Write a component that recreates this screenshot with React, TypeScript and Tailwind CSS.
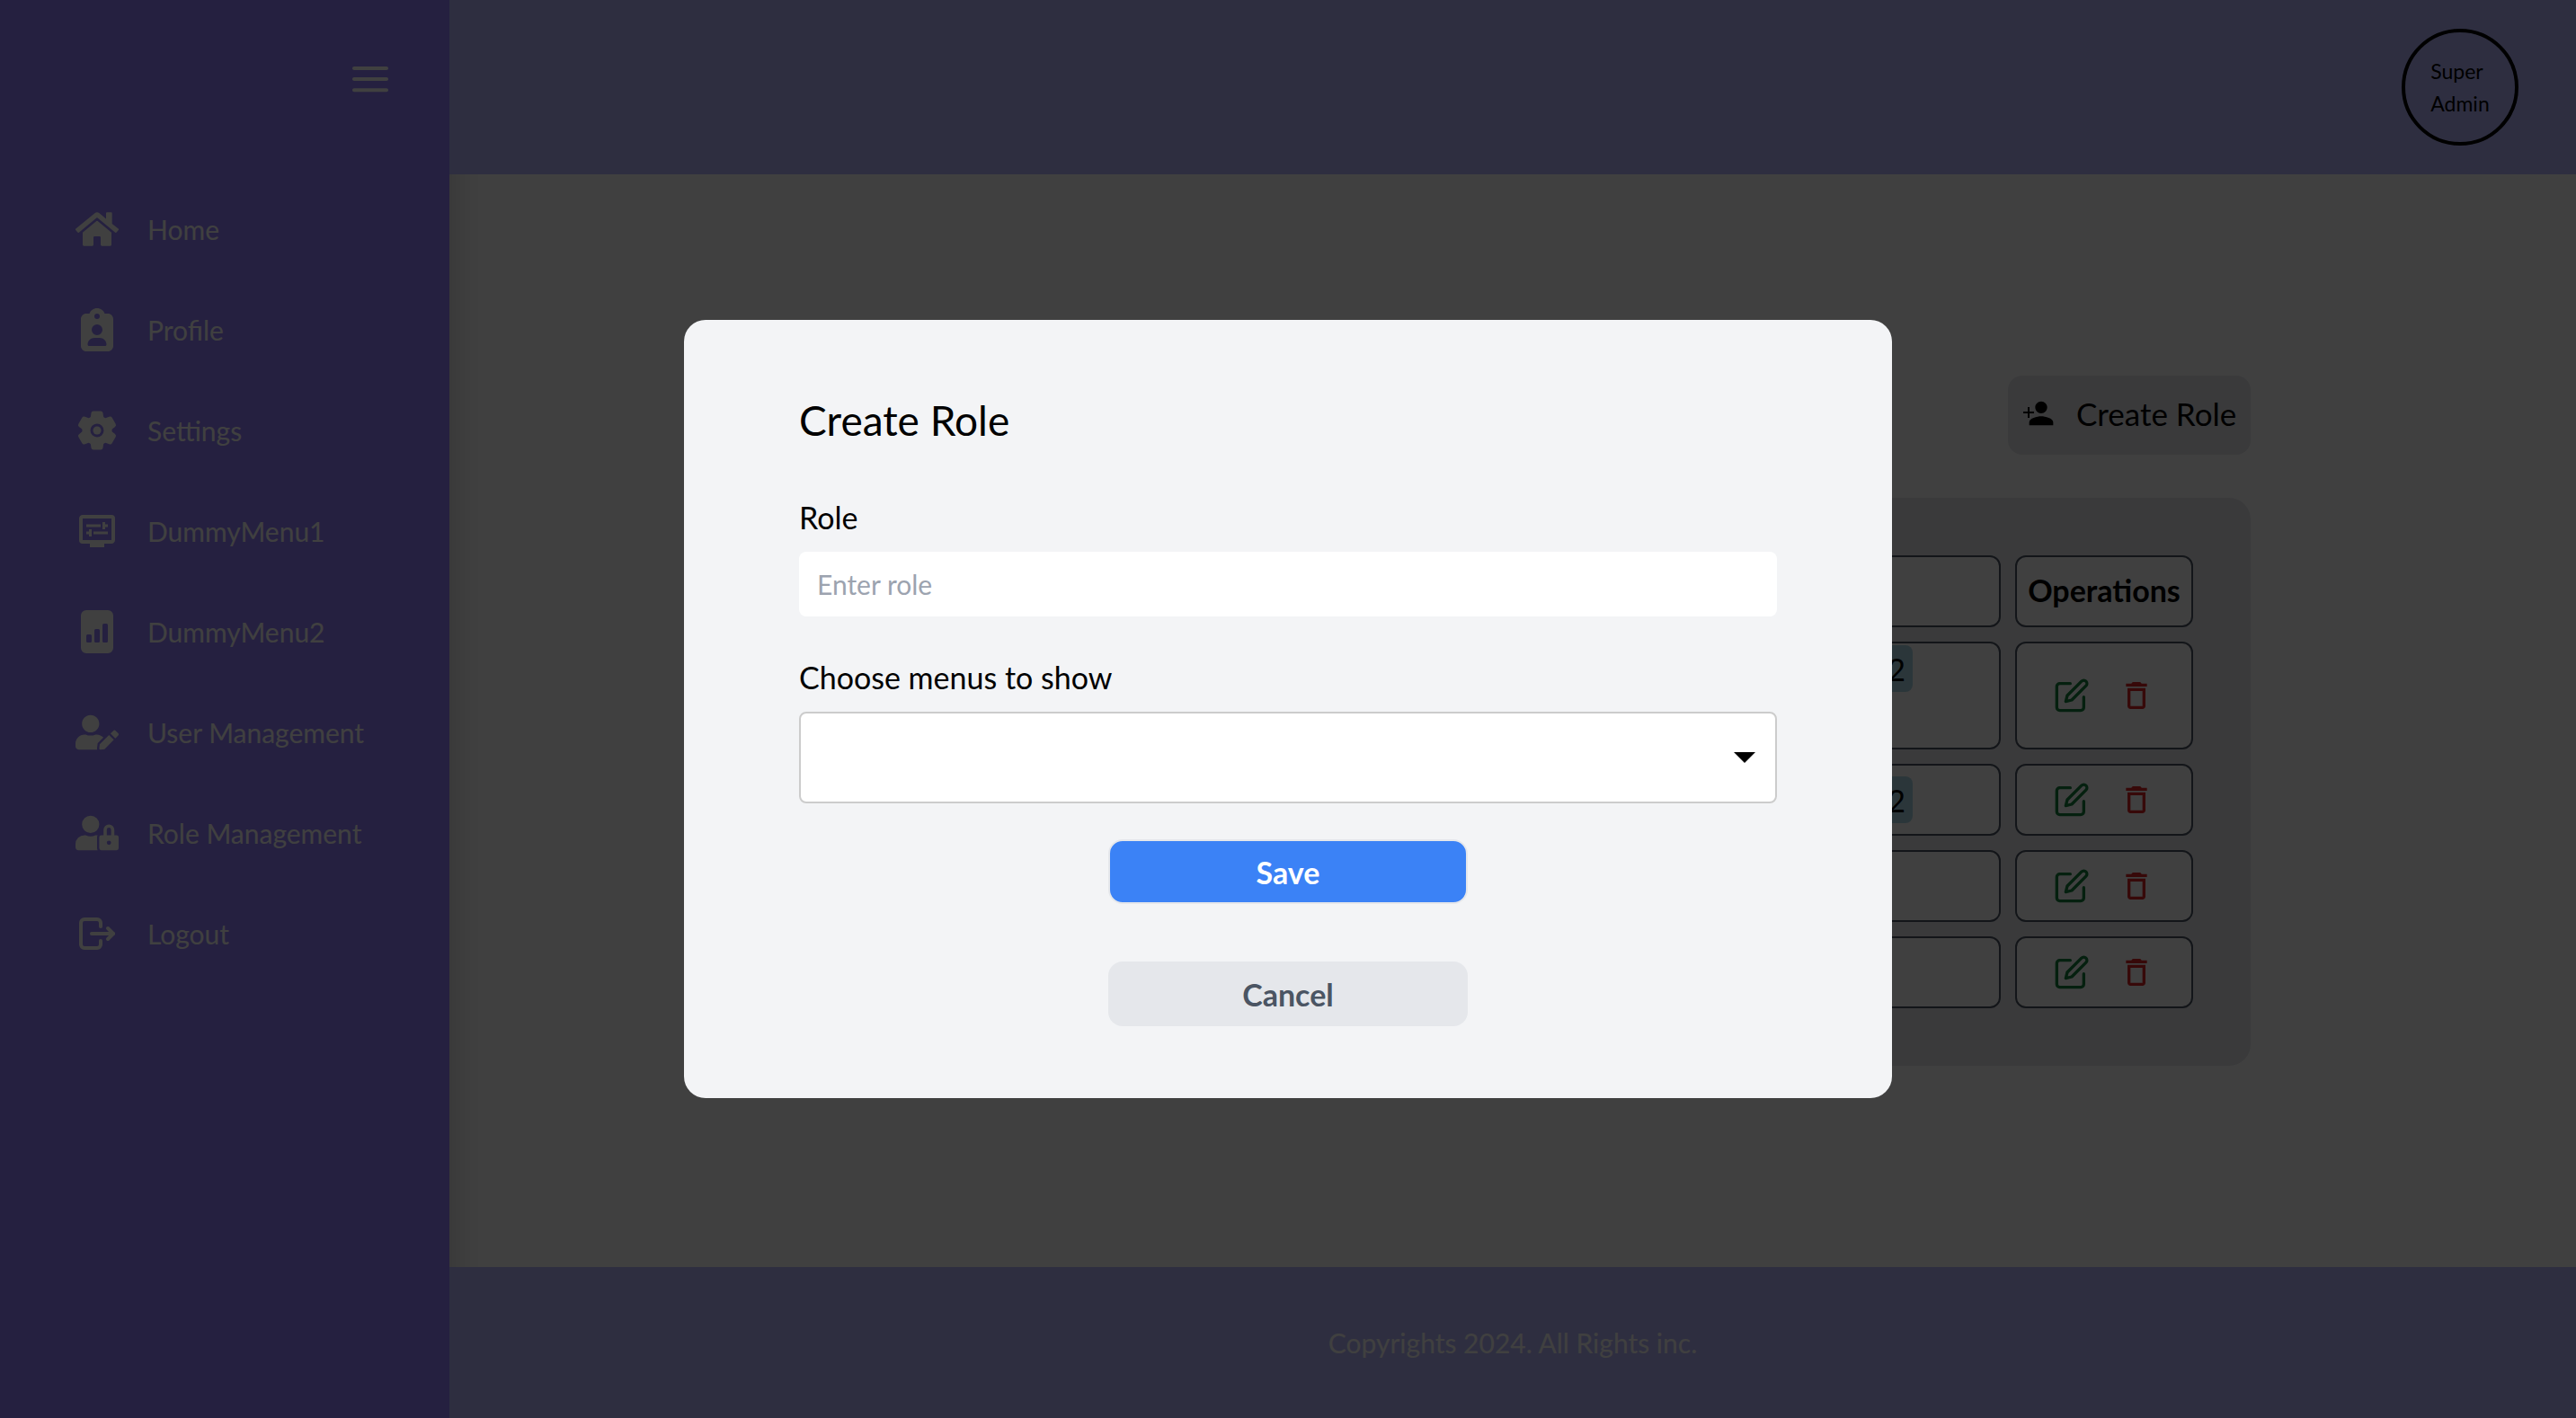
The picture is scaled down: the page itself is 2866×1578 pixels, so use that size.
import React from "react";
import { FaHome, FaUserEdit, FaUserLock } from "react-icons/fa";
import { FaClipboardUser } from "react-icons/fa6";
import { IoSettings } from "react-icons/io5";
import { MdOutlineDisplaySettings, MdDeleteOutline } from "react-icons/md";
import { BsFileBarGraphFill } from "react-icons/bs";
import { TbLogout } from "react-icons/tb";
import { CgMenu } from "react-icons/cg";
import { FiEdit } from "react-icons/fi";

const menu = [
  { label: "Home", Icon: FaHome },
  { label: "Profile", Icon: FaClipboardUser },
  { label: "Settings", Icon: IoSettings },
  { label: "DummyMenu1", Icon: MdOutlineDisplaySettings },
  { label: "DummyMenu2", Icon: BsFileBarGraphFill },
  { label: "User Management", Icon: FaUserEdit },
  { label: "Role Management", Icon: FaUserLock },
  { label: "Logout", Icon: TbLogout },
];

const rows = [
  { id: 1, chip: true, tall: true },
  { id: 2, chip: true, tall: false },
  { id: 3, chip: false, tall: false },
  { id: 4, chip: false, tall: false },
];

function AddPersonIcon() {
  return (
    <svg viewBox="0 0 24 24" className="size-10 shrink-0" fill="currentColor" aria-hidden="true">
      <path d="M15 12c2.21 0 4-1.79 4-4s-1.79-4-4-4-4 1.79-4 4 1.79 4 4 4zm0 2c-2.67 0-8 1.34-8 4v2h16v-2c0-2.66-5.33-4-8-4z" />
      <path d="M6 7.8h1.2v3h3V12h-3v3H6v-3H3v-1.2h3z" />
    </svg>
  );
}

function Sidebar() {
  return (
    <aside className="relative flex w-[500px] shrink-0 flex-col bg-[#9381ff] text-white shadow-[0_0_40px_rgba(0,0,0,0.2)]">
      <div className="flex justify-end px-16 pt-16">
        <button type="button" aria-label="Toggle menu">
          <CgMenu className="size-12" />
        </button>
      </div>
      <nav className="mt-[119px] flex flex-col gap-16 px-[84px]">
        {menu.map(({ label, Icon }) => (
          <a key={label} href="#" className="flex h-12 items-center gap-8 text-[30px] whitespace-nowrap">
            <Icon className="size-12 shrink-0" />
            <span>{label}</span>
          </a>
        ))}
      </nav>
    </aside>
  );
}

function RoleTable() {
  const cell = "rounded-xl border-2 border-[#4b5563] bg-white";
  return (
    <div className="rounded-3xl bg-[#e5e7eb] p-12">
      <table className="w-full border-separate border-spacing-4">
        <thead>
          <tr className="h-20 text-[34px]">
            <th className={cell}>Role</th>
            <th className={cell}></th>
            <th className={cell + " w-[198px] pb-1"}>Operations</th>
          </tr>
        </thead>
        <tbody>
          {rows.map((row) => (
            <tr key={row.id} className={row.tall ? "h-30" : "h-20"}>
              <td className={cell + " w-[400px]"}></td>
              <td className={cell + " pr-24 " + (row.tall ? "pt-0.5 align-top" : "align-middle")}>
                {row.chip && (
                  <div className="flex justify-end text-[34px]">
                    <span className="flex h-13 items-center rounded-lg bg-[#add8e6] px-2">DummyMenu2</span>
                  </div>
                )}
              </td>
              <td className={cell}>
                <div className="flex items-center justify-center gap-8">
                  <button type="button" aria-label="Edit role" className="text-[#15803d]">
                    <FiEdit className="size-10" />
                  </button>
                  <button type="button" aria-label="Delete role" className="text-[#dc2626]">
                    <MdDeleteOutline className="size-10" />
                  </button>
                </div>
              </td>
            </tr>
          ))}
        </tbody>
      </table>
    </div>
  );
}

function CreateRoleDialog() {
  return (
    <div className="fixed inset-0 z-20 flex items-center justify-center bg-black/75">
      <form
        role="dialog"
        aria-labelledby="dialog-title"
        className="flex w-full max-w-[1344px] flex-col rounded-3xl bg-[#f3f4f6] px-32 py-20"
      >
        <h2 id="dialog-title" className="text-[46px] leading-[64px]">
          Create Role
        </h2>
        <label htmlFor="role" className="mt-12 text-[34px] leading-[56px]">
          Role
        </label>
        <input
          id="role"
          placeholder="Enter role"
          className="mt-2.5 h-18 rounded-lg bg-white px-5 text-[30px] placeholder:text-[#9ca3af]"
        />
        <label htmlFor="menus" className="mt-10 text-[34px] leading-[56px]">
          Choose menus to show
        </label>
        <div className="relative mt-2.5">
          <select
            id="menus"
            defaultValue=""
            className="block h-[102px] w-full appearance-none rounded-lg border-2 border-[#cccccc] bg-white px-5 text-[30px]"
          >
            <option value=""></option>
          </select>
          <svg
            viewBox="0 0 24 12"
            className="pointer-events-none absolute top-[45px] right-6 h-3 w-6"
            aria-hidden="true"
          >
            <path d="M0 0h24L12 12z" />
          </svg>
        </div>
        <button
          type="submit"
          className="mt-10 h-18 w-[400px] self-center rounded-2xl border-2 border-[#e5e7eb] bg-[#3b82f6] text-[34px] font-bold text-white"
        >
          Save
        </button>
        <button
          type="button"
          className="mt-16 h-18 w-[400px] self-center rounded-2xl bg-[#e5e7eb] text-[34px] font-bold text-[#4b5563]"
        >
          Cancel
        </button>
      </form>
    </div>
  );
}

export default function App() {
  return (
    <div className="flex min-h-screen bg-white font-['Gill_Sans_MT','Gill_Sans',Lato,sans-serif] text-black">
      <Sidebar />
      <div className="flex flex-1 flex-col">
        <header className="relative z-10 flex justify-end bg-[#b8b8ff] px-16 py-8">
          <div className="flex size-[130px] items-center justify-center rounded-full border-4 border-black text-[23px] leading-9">
            <div>
              Super
              <br />
              Admin
            </div>
          </div>
        </header>
        <main className="flex flex-1 flex-col justify-center gap-12 px-[362px]">
          <button
            type="button"
            className="flex h-22 w-[270px] items-center gap-6 self-end rounded-2xl bg-[#e5e7eb] px-3 pb-1 text-[35px] whitespace-nowrap"
          >
            <AddPersonIcon />
            Create Role
          </button>
          <RoleTable />
        </main>
        <footer className="relative z-10 flex h-[168px] items-center justify-center bg-[#b8b8ff] text-[30px] text-white">
          Copyrights 2024. All Rights inc.
        </footer>
      </div>
      <CreateRoleDialog />
    </div>
  );
}
